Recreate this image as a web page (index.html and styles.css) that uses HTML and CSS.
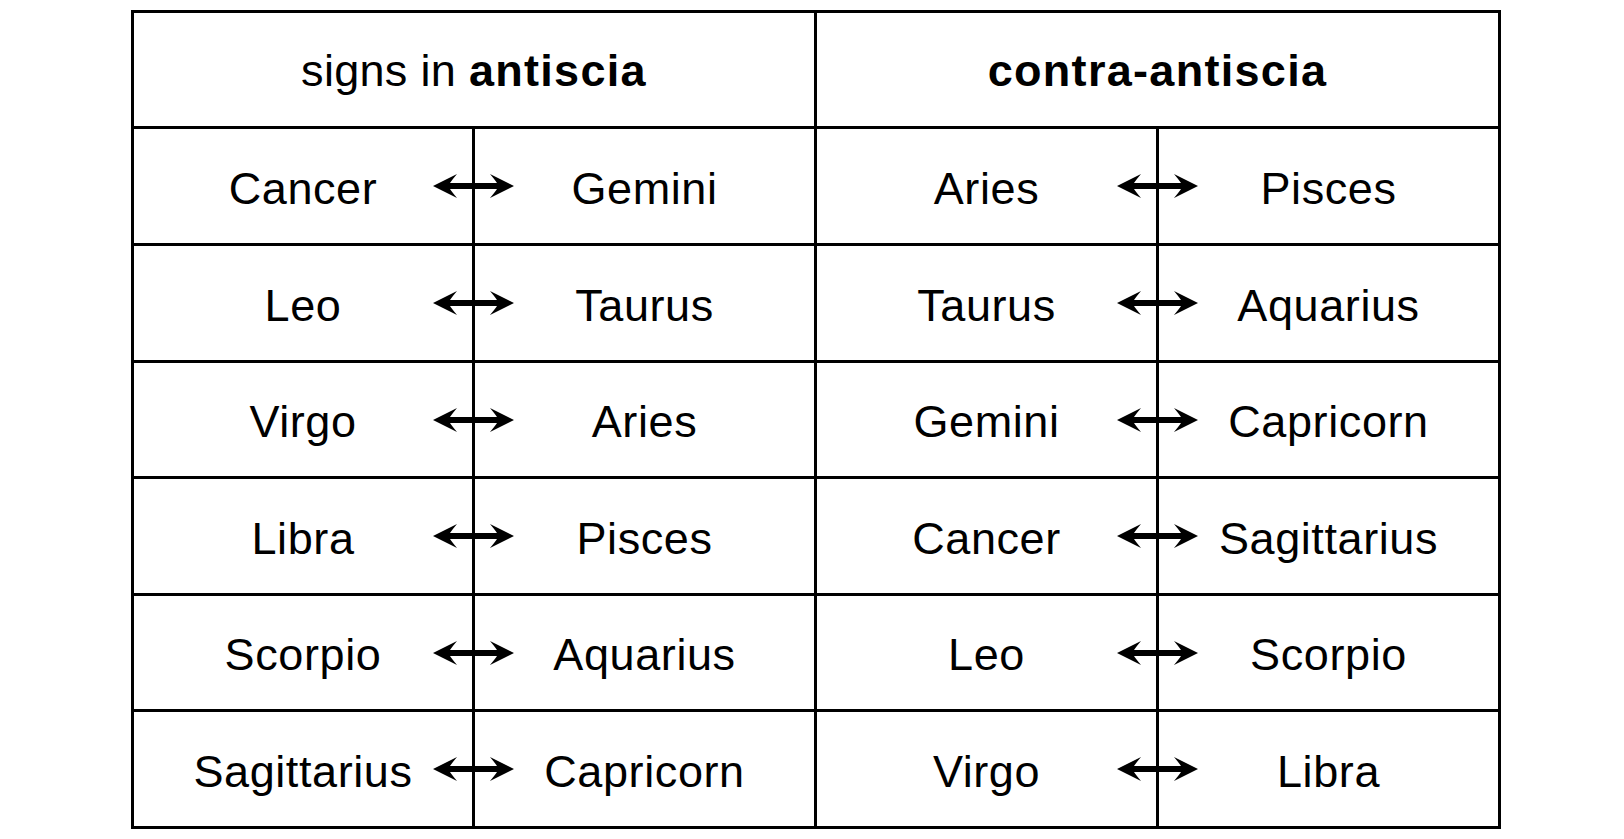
FILE: index.html
```html
<!DOCTYPE html>
<html lang="en">
<head>
<meta charset="utf-8">
<title>Antiscia and contra-antiscia</title>
<link rel="stylesheet" href="styles.css">
</head>
<body>
<svg class="defs" width="0" height="0" aria-hidden="true">
  <defs>
    <symbol id="arr" viewBox="0 0 81 26">
      <path d="M0 13 L24 1 Q19 7 17 10 L64 10 Q62 7 57 1 L81 13 L57 25 Q62 19 64 16 L17 16 Q19 19 24 25 Z" fill="#000"/>
    </symbol>
  </defs>
</svg>
<div class="table">
  <div class="head"><span>signs in <b>antiscia</b></span></div>
  <div class="head"><span><b>contra-antiscia</b></span></div>

  <div class="cell l">Cancer<svg class="arrow"><use href="#arr"/></svg></div><div class="cell">Gemini</div>
  <div class="cell l">Aries<svg class="arrow"><use href="#arr"/></svg></div><div class="cell">Pisces</div>

  <div class="cell l">Leo<svg class="arrow"><use href="#arr"/></svg></div><div class="cell">Taurus</div>
  <div class="cell l">Taurus<svg class="arrow"><use href="#arr"/></svg></div><div class="cell">Aquarius</div>

  <div class="cell l">Virgo<svg class="arrow"><use href="#arr"/></svg></div><div class="cell">Aries</div>
  <div class="cell l">Gemini<svg class="arrow"><use href="#arr"/></svg></div><div class="cell">Capricorn</div>

  <div class="cell l">Libra<svg class="arrow"><use href="#arr"/></svg></div><div class="cell">Pisces</div>
  <div class="cell l">Cancer<svg class="arrow"><use href="#arr"/></svg></div><div class="cell">Sagittarius</div>

  <div class="cell l">Scorpio<svg class="arrow"><use href="#arr"/></svg></div><div class="cell">Aquarius</div>
  <div class="cell l">Leo<svg class="arrow"><use href="#arr"/></svg></div><div class="cell">Scorpio</div>

  <div class="cell l">Sagittarius<svg class="arrow"><use href="#arr"/></svg></div><div class="cell">Capricorn</div>
  <div class="cell l">Virgo<svg class="arrow"><use href="#arr"/></svg></div><div class="cell">Libra</div>
</div>
</body>
</html>
```

FILE: styles.css
```css
html, body {
  margin: 0;
  padding: 0;
  background: #fff;
}

body {
  font-family: "Liberation Sans", Arial, Helvetica, sans-serif;
  color: #000;
}

.defs {
  position: absolute;
  width: 0;
  height: 0;
  overflow: hidden;
}

.table {
  margin: 10px 0 0 131px;
  width: 1364px;
  border: 3px solid #000;
  background: #000;
  display: grid;
  grid-template-columns: 338px 339px 339px 339px;
  grid-template-rows: 113px 114px 114px 113px 114px 113px 114px;
  gap: 3px;
}

.head,
.cell {
  background: #fff;
  display: flex;
  align-items: center;
  justify-content: center;
  font-size: 45px;
  white-space: nowrap;
}

.head {
  grid-column: span 2;
  padding-top: 3px;
  letter-spacing: 0.3px;
}

.head b {
  font-weight: 700;
  letter-spacing: 1.3px;
}

.cell {
  padding-top: 5px;
  letter-spacing: 0.6px;
}

.cell.l {
  position: relative;
}

.arrow {
  position: absolute;
  z-index: 1;
  top: 50%;
  right: -42px;
  width: 81px;
  height: 26px;
  margin-top: -13px;
}
```
